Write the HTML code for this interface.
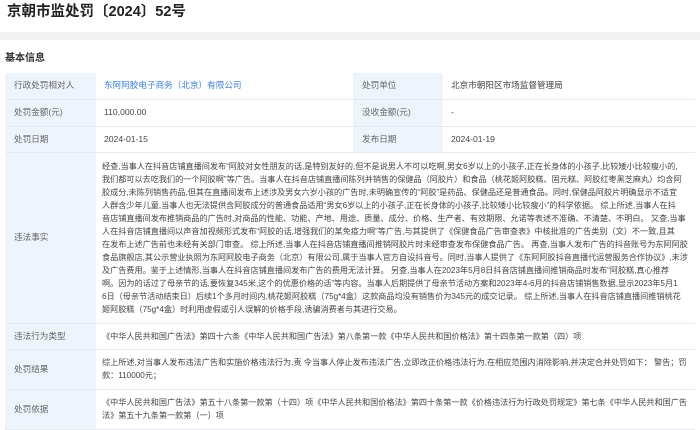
<!DOCTYPE html>
<html><head><meta charset="utf-8"><style>
*{margin:0;padding:0;box-sizing:border-box}
body{width:700px;height:426px;overflow:hidden;background:#fff;font-family:"Liberation Sans","Noto Sans CJK SC",sans-serif;color:#333;position:relative}
.title{position:absolute;left:7px;top:2px;font-size:14.5px;font-weight:bold;color:#222;line-height:20px}
.band{position:absolute;left:0;top:32px;width:700px;height:8px;background:#f1f1f1}
.sec{position:absolute;left:5px;top:52px;font-size:10px;font-weight:bold;color:#333;line-height:14px}
table{position:absolute;left:5px;top:73px;width:690px;border-collapse:collapse;font-size:8.6px;table-layout:fixed}
td{border-bottom:1px solid #e6e9ee;vertical-align:middle;padding:0 0 0 8px;line-height:13px;white-space:nowrap;overflow:hidden}
td.l{background:#edf4fb;color:#666;padding-left:9px}
td.v{color:#444}
.lk{color:#3b7fd6}
.p{padding-left:6px;padding-top:2px;padding-bottom:2px;font-size:8.15px;letter-spacing:0}
</style></head><body>
<div class="title">京朝市监处罚〔2024〕52号</div>
<div class="band"></div>
<div class="sec">基本信息</div>
<table>
<colgroup><col style="width:91px"><col style="width:257px"><col style="width:90px"><col style="width:252px"></colgroup>
<tr style="height:26px"><td class="l">行政处罚相对人</td><td class="v"><span class="lk">东阿阿胶电子商务（北京）有限公司</span></td><td class="l">处罚单位</td><td class="v">北京市朝阳区市场监督管理局</td></tr>
<tr style="height:27px"><td class="l">处罚金额(元)</td><td class="v">110,000.00</td><td class="l">没收金额(元)</td><td class="v">-</td></tr>
<tr style="height:26px"><td class="l">处罚日期</td><td class="v">2024-01-15</td><td class="l">发布日期</td><td class="v">2024-01-19</td></tr>
<tr style="height:171px"><td class="l">违法事实</td><td class="v p" colspan="3">经查,当事人在抖音店铺直播间发布“阿胶对女性朋友的话,是特别友好的,但不是说男人不可以吃啊,男女6岁以上的小孩子,正在长身体的小孩子,比较矮小比较瘦小的,<br>我们都可以去吃我们的一个阿胶啊”等广告。当事人在抖音店铺直播间陈列并销售的保健品（阿胶片）和食品（桃花姬阿胶糕、固元糕、阿胶红枣黑芝麻丸）均含阿<br>胶成分,未陈列销售药品,但其在直播间发布上述涉及男女六岁小孩的广告时,未明确宣传的“阿胶”是药品、保健品还是普通食品。同时,保健品阿胶片明确显示不适宜<br>人群含少年儿童,当事人也无法提供含阿胶成分的普通食品适用“男女6岁以上的小孩子,正在长身体的小孩子,比较矮小比较瘦小”的科学依据。 综上所述,当事人在抖<br>音店铺直播间发布推销商品的广告时,对商品的性能、功能、产地、用途、质量、成分、价格、生产者、有效期限、允诺等表述不准确、不清楚、不明白。 又查,当事<br>人在抖音店铺直播间以声音加视频形式发布“阿胶的话,增强我们的某免疫力啊”等广告,与其提供了《保健食品广告审查表》中核批准的广告类别（文）不一致,且其<br>在发布上述广告前也未经有关部门审查。 综上所述,当事人在抖音店铺直播间推销阿胶片时未经审查发布保健食品广告。 再查,当事人发布广告的抖音账号为东阿阿胶<br>食品旗舰店,其公示营业执照为东阿阿胶电子商务（北京）有限公司,属于当事人官方自设抖音号。同时,当事人提供了《东阿阿胶抖音直播代运营服务合作协议》,未涉<br>及广告费用。鉴于上述情形,当事人在抖音店铺直播间发布广告的费用无法计算。 另查,当事人在2023年5月8日抖音店铺直播间推销商品时发布“阿胶糕,真心推荐<br>啊。因为的话过了母亲节的话,要恢复345米,这个的优惠价格的话”等内容。当事人后期提供了母亲节活动方案和2023年4-6月的抖音店铺销售数据,显示2023年5月1<br>6日（母亲节活动结束日）后续1个多月时间内,桃花姬阿胶糕（75g*4盒）这款商品均没有销售价为345元的成交记录。 综上所述,当事人在抖音店铺直播间推销桃花<br>姬阿胶糕（75g*4盒）时利用虚假或引人误解的价格手段,诱骗消费者与其进行交易。</td></tr>
<tr style="height:26px"><td class="l">违法行为类型</td><td class="v p" colspan="3">《中华人民共和国广告法》第四十六条《中华人民共和国广告法》第八条第一款《中华人民共和国价格法》第十四条第一款第（四）项</td></tr>
<tr style="height:40px"><td class="l">处罚结果</td><td class="v p" colspan="3">综上所述,对当事人发布违法广告和实施价格违法行为,责 令当事人停止发布违法广告,立即改正价格违法行为,在相应范围内消除影响,并决定合并处罚如下： 警告；罚<br>款：110000元；</td></tr>
<tr style="height:40px"><td class="l">处罚依据</td><td class="v p" colspan="3">《中华人民共和国广告法》第五十八条第一款第（十四）项《中华人民共和国价格法》第四十条第一款《价格违法行为行政处罚规定》第七条《中华人民共和国广告<br>法》第五十九条第一款第（一）项</td></tr>
</table>
</body></html>
